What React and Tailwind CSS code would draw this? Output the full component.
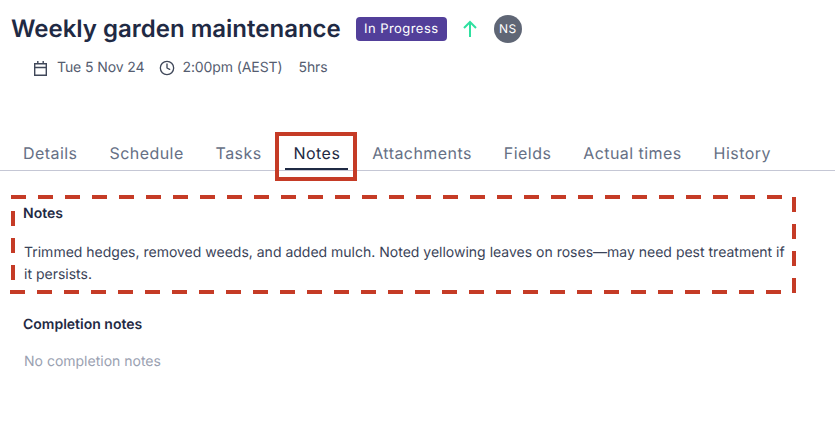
import { Clock } from 'lucide-react';

const tabs = ['Details', 'Schedule', 'Tasks', 'Notes', 'Attachments', 'Fields', 'Actual times', 'History'];

export default function App() {
    return (
        <div className="relative min-h-screen overflow-hidden bg-white font-['Inter',sans-serif] text-[#1f2a44] [text-rendering:geometricPrecision]">
            {/* Header */}
            <div className="flex h-[43px] items-center pl-[11px] pt-[15px]">
                <h1 className="text-2xl font-semibold leading-7">Weekly garden maintenance</h1>
                <span className="ml-[15px] flex h-6 w-[91px] items-center justify-center rounded-sm bg-[#523f9a] pt-px text-[13px] tracking-[0.45px] text-white">
                    In Progress
                </span>
                <svg className="ml-4 text-[#2fe0a0]" width="14" height="18" viewBox="0 0 14 18" fill="none" stroke="currentColor" strokeWidth="2">
                    <path d="M7 17V2M1 8l6-6 6 6" />
                </svg>
                <div className="ml-[17px] flex h-7 w-7 items-center justify-center rounded-full bg-[#5f6675] text-xs tracking-[0.3px] text-white">
                    NS
                </div>
            </div>
            <div className="mt-[15px] flex h-5 items-center pl-[34px] text-sm tracking-[-0.1px] text-[#555d70]">
                <svg className="text-[#3f4759]" width="13" height="15" viewBox="0 0 13 15" fill="none" stroke="currentColor" strokeWidth="1.4">
                    <path d="M.7 2.7h11.6v11.6H.7zM.7 6.5h11.6M3.8 0v3M9.2 0v3" />
                </svg>
                <span className="ml-[10px]">Tue 5 Nov 24</span>
                <Clock size={16} strokeWidth={2} className="ml-[15px] text-[#3f4759]" />
                <span className="ml-[7px]">2:00pm (AEST)</span>
                <span className="ml-[16px]">5hrs</span>
            </div>

            {/* Tabs */}
            <div className="mt-[59px] flex h-[34px] gap-[31.9px] border-b border-[#c5c7d5] pl-[23px]">
                {tabs.map((tab) => (
                    <div
                        key={tab}
                        className={`relative pt-[4px] text-base leading-6 tracking-[0.45px] ${
                            tab === 'Notes' ? 'text-[#1f2a44]' : 'text-[#667085]'
                        }`}
                    >
                        {tab}
                        {tab === 'Notes' && (
                            <div className="absolute -left-[9px] -right-[8px] top-[31px] h-0.5 bg-[#1f2a44]" />
                        )}
                    </div>
                ))}
            </div>

            {/* Notes */}
            <div className="pl-6 pr-[45px] pt-[33px]">
                <h2 className="-ml-px text-sm font-semibold leading-[20px]">Notes</h2>
                <p className="mt-[18px] text-sm leading-[22px] text-[#3a4358]">
                    Trimmed hedges, removed weeds, and added mulch. Noted yellowing leaves on roses—may need pest treatment if it persists.
                </p>
                <h2 className="-ml-px mt-[29px] text-sm font-semibold leading-[20px]">Completion notes</h2>
                <p className="mt-[17px] text-sm leading-5 text-[#9aa1b1]">No completion notes</p>
            </div>

            {/* Annotations */}
            <div className="absolute left-[275px] top-[132px] h-[49px] w-[82px] border-4 border-[#c53b26]" />
            <svg className="absolute left-0 top-0" width="835" height="431" fill="none" stroke="#c53b26" strokeWidth="4" strokeDasharray="15 12">
                <path d="M11 197H785" />
                <path d="M794 197V293" />
                <path d="M10 292H785" />
                <path d="M13 211V294" />
            </svg>
        </div>
    );
}
